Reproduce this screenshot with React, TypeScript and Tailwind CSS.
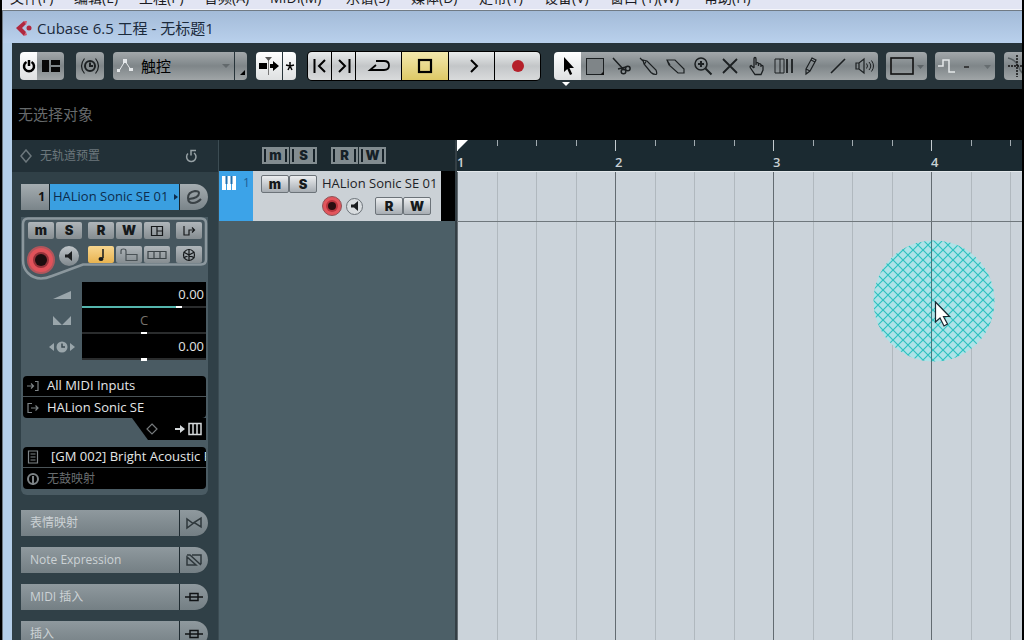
import type { ReactNode } from "react";
import clsx from "clsx";

const menuItems = [
  { label: "文件(F)", width: "w-[64px]" },
  { label: "编辑(E)", width: "w-[65px]" },
  { label: "工程(P)", width: "w-[65px]" },
  { label: "音频(A)", width: "w-[66px]" },
  { label: "MIDI(M)", width: "w-[76px]" },
  { label: "乐谱(S)", width: "w-[65px]" },
  { label: "媒体(D)", width: "w-[68px]" },
  { label: "走带(T)", width: "w-[65px]" },
  { label: "设备(V)", width: "w-[66px]" },
  { label: "窗口 (1)(W)", width: "w-[94px]" },
  { label: "帮助(H)", width: "w-[64px]" },
];

const grayFace = "bg-linear-to-b from-[#a3a8ab] via-[#7f8689] to-[#a0a5a7]";
const whiteFace = "bg-linear-to-b from-[#ffffff] via-[#eceeef] to-[#dfe1e2]";
const silverFace = "bg-linear-to-b from-[#e9ebec] via-[#c3c6c8] to-[#d9dbdc]";

function Icon({ w = 20, h = 20, children }: { w?: number; h?: number; children: ReactNode }) {
  return (
    <svg width={w} height={h} viewBox={`0 0 ${w} ${h}`} fill="none" stroke="currentColor" strokeWidth="1.5" className="shrink-0">
      {children}
    </svg>
  );
}

function ToolButton({ label, className, children }: { label: string; className?: string; children: ReactNode }) {
  return (
    <button aria-label={label} className={clsx("h-7 flex items-center justify-center shrink-0", className)}>
      {children}
    </button>
  );
}

const tools = [
  {
    name: "Select",
    icon: <path d="M6 1v15l3.300-3 2.700 6 2.200-1-2.700-6H16z" fill="#000" stroke="none" />,
  },
  {
    name: "Range",
    icon: (
      <>
        <rect x="1.500" y="2.500" width="17" height="16" strokeWidth="1" fill="#7f8588" />
        <path d="M19 15v4h-4z" fill="#111" stroke="none" />
      </>
    ),
  },
  {
    name: "Split",
    icon: (
      <>
        <path d="M1 2l11 12M6 13l8-2" />
        <circle cx="11.500" cy="15.500" r="2.300" />
        <circle cx="15.800" cy="12.500" r="2.300" />
      </>
    ),
  },
  {
    name: "Glue",
    icon: <path d="M1 2l3 3M4 4l4 1 9 9q1.500 4 0 4.500-3 0-5-2L5 8zM7 5.500L5.500 8" strokeWidth="1.200" />,
  },
  {
    name: "Erase",
    icon: <path d="M1 4h8l9 9v4h-6L3 9zM1 4l3 5" strokeWidth="1.200" />,
  },
  {
    name: "Zoom",
    icon: (
      <>
        <circle cx="8" cy="8" r="6" />
        <path d="M8 5v6M5 8h6" strokeWidth="2" />
        <path d="M12.500 12.500l6 6" strokeWidth="2" />
      </>
    ),
  },
  { name: "Mute", icon: <path d="M3 3l14 14M17 3L3 17" strokeWidth="1.800" /> },
  {
    name: "Time Warp",
    icon: (
      <path
        d="M7 12V3q0-1.500 1-1.500T9 3v6M9 7q2-1 2.500.5V10M11.500 8q2-.8 2.500.7V11M14 9.500q2-.5 2 1V14l-2 4.500H8L3.500 12q-1-2 .5-2.500L7 12"
        strokeWidth="1.300"
      />
    ),
  },
  {
    name: "Comp",
    icon: (
      <>
        <path d="M1 3h9v14H1zM6 3v14" strokeWidth="1" />
        <path d="M13 3v14M18 3v14" strokeWidth="1.800" />
      </>
    ),
  },
  { name: "Draw", icon: <path d="M5 13L11 2l4 2-6 11-4 3zM5 13l4 2M10 4l4 2" strokeWidth="1.200" /> },
  { name: "Line", icon: <path d="M3 17L17 3" strokeWidth="1.600" /> },
  {
    name: "Play",
    icon: (
      <>
        <path d="M1 7h3l5-4v14l-5-4H1zM4 7v6" strokeWidth="1.200" />
        <path d="M11.500 7.500q2 2.500 0 5M14 6q3.500 4 0 8M16.500 4.500q4 5.500 0 11" strokeWidth="1" />
      </>
    ),
  },
];

function Toolbar() {
  return (
    <div className="h-[46px] shrink-0 bg-[#27343a] flex items-center px-2 overflow-hidden text-[#1c2022]">
      <div className="flex shrink-0 rounded-sm overflow-hidden mr-3">
        <ToolButton label="Activate Project" className={clsx("w-[17px]", whiteFace)}>
          <Icon w={14} h={14}>
            <path d="M4.500 3a5 5 0 1 0 5 0M7 1v6" stroke="#000" strokeWidth="2.500" />
          </Icon>
        </ToolButton>
        <ToolButton label="Window Layout" className={clsx("w-[27px]", grayFace)}>
          <Icon w={18} h={12}>
            <path d="M0 0h7v12H0zM9 0h9v5H9zM9 7h9v5H9z" fill="#080808" stroke="none" />
          </Icon>
        </ToolButton>
      </div>
      <ToolButton label="Constrain Delay Compensation" className={clsx("w-7 rounded-sm mr-[9px]", grayFace)}>
        <Icon>
          <circle cx="10" cy="10" r="5" strokeWidth="2" />
          <path d="M10 6.500V10h3" strokeWidth="2" />
          <path d="M4.500 2.500q-6 7.500 0 15M15.500 2.500q6 7.500 0 15" strokeWidth="1.200" />
        </Icon>
      </ToolButton>
      <div className="flex shrink-0 rounded-sm overflow-hidden mr-[9px] gap-px">
        <label className={clsx("relative flex items-center w-[121px] h-7", grayFace)}>
          <span className="absolute left-1 text-[#e5e8ea] pointer-events-none">
            <Icon w={16} h={16}>
              <path d="M2 13L8 3l6 9" strokeWidth="1" />
              <path d="M0 11h3v3H0zM6 1h4v4H6zM12 10h4v3h-4z" fill="currentColor" stroke="none" />
            </Icon>
          </span>
          <select aria-label="Automation Mode" className="appearance-none w-full h-full pl-7 text-[15px] text-black outline-none">
            <option>触控</option>
          </select>
          <span className="absolute right-1 border-x-4 border-t-4 border-x-transparent border-t-[#62696c] pointer-events-none" />
        </label>
        <ToolButton label="Automation Panel" className={clsx("w-3", grayFace)}>
          <Icon w={10} h={20}>
            <path d="M9 14v5H4z" fill="#000" stroke="none" />
          </Icon>
        </ToolButton>
      </div>
      <div className="flex shrink-0 rounded-sm overflow-hidden mr-3 gap-px">
        <ToolButton label="Auto-Scroll" className={clsx("w-[26px]", whiteFace)}>
          <Icon w={22} h={20}>
            <path d="M1 7h8v6H1zM12 8h3V5l6 5-6 5v-3h-3z" fill="#000" stroke="none" />
            <path d="M10.500 3v16" stroke="#777" strokeWidth="1" />
            <path d="M7 1h7l-3.500 4z" fill="#555" stroke="none" />
          </Icon>
        </ToolButton>
        <ToolButton label="Suspend Auto-Scroll" className={clsx("w-[13px]", whiteFace)}>
          <Icon w={10} h={10}>
            <path d="M5 1v4M5 5L1 4M5 5l4-1M5 5L3 9M5 5l2 4" stroke="#000" />
          </Icon>
        </ToolButton>
      </div>

      {/* Transport */}
      <div className="flex shrink-0 rounded-sm mr-3.5 gap-px bg-black ring-1 ring-black text-black">
        <ToolButton label="Go to Left Locator" className={clsx("w-[23px] rounded-l-sm", silverFace)}>
          <Icon w={14} h={16}>
            <path d="M1.500 1v14M12 2L6 8l6 6" strokeWidth="2" />
          </Icon>
        </ToolButton>
        <ToolButton label="Go to Right Locator" className={clsx("w-[23px]", silverFace)}>
          <Icon w={14} h={16}>
            <path d="M12.500 1v14M2 2l6 6-6 6" strokeWidth="2" />
          </Icon>
        </ToolButton>
        <ToolButton label="Cycle" className={clsx("w-[45px]", silverFace)}>
          <Icon w={24} h={16}>
            <path d="M9 3h8q5 0 5 4.500T17 12H3l6-5" strokeWidth="1.800" />
          </Icon>
        </ToolButton>
        <ToolButton label="Stop" className="w-[46px] bg-linear-to-b from-[#f3e8ad] to-[#dec966]">
          <Icon w={16} h={16}>
            <rect x="2" y="2" width="12" height="12" strokeWidth="2.200" />
          </Icon>
        </ToolButton>
        <ToolButton label="Start" className={clsx("w-[45px]", silverFace)}>
          <Icon w={16} h={16}>
            <path d="M7 2l6 6-6 6" strokeWidth="2" />
          </Icon>
        </ToolButton>
        <ToolButton label="Record" className={clsx("w-[45px] rounded-r-sm", silverFace)}>
          <span className="size-3 rounded-full bg-[#b5202a]" />
        </ToolButton>
      </div>

      <div className="flex shrink-0 mr-2">
        {tools.map((tool, i) => (
          <div key={tool.name} className="relative">
            <ToolButton
              label={tool.name}
              className={clsx("w-[27px]", i === 0 ? whiteFace : grayFace, i === 0 && "rounded-l-sm", i === tools.length - 1 && "rounded-r-sm")}
            >
              <Icon>{tool.icon}</Icon>
            </ToolButton>
            {i === 0 && <span className="absolute left-2 top-[30px] border-x-4 border-t-4 border-x-transparent border-t-white" />}
          </div>
        ))}
      </div>
      <ToolButton label="Color" className={clsx("w-[41px] rounded-sm mr-2", grayFace)}>
        <Icon w={34} h={20}>
          <rect x="1" y="2" width="22" height="16" strokeWidth="1.600" stroke="#111" />
          <path d="M27 9h7l-3.500 4z" fill="#5d6467" stroke="none" />
        </Icon>
      </ToolButton>
      <ToolButton label="Nudge" className={clsx("w-[60px] rounded-sm mr-[9px]", grayFace)}>
        <Icon w={56} h={20}>
          <path d="M1 10h5V4h6v12h6" stroke="#e4e7e9" />
          <path d="M27 11h5" stroke="#222" />
          <path d="M47 9h7l-3.500 4z" fill="#666d70" stroke="none" />
        </Icon>
      </ToolButton>
      <ToolButton label="Snap" className={clsx("w-10 rounded-sm justify-start", grayFace)}>
        <Icon w={34} h={24}>
          <path d="M4 4q9 2 12 12l4 5" stroke="#555c5f" />
          <path d="M13 1v22M4 12h26" stroke="#111" strokeDasharray="2 1" />
        </Icon>
      </ToolButton>
    </div>
  );
}

function KeyButton({ label, wide, tone = "dim", children }: { label: string; wide?: boolean; tone?: "dim" | "light" | "on"; children: ReactNode }) {
  return (
    <button
      aria-label={label}
      className={clsx(
        "flex items-center justify-center rounded-xs font-['Inter',sans-serif] font-black text-[13px] leading-none text-[#16191b] shrink-0",
        wide ? "w-7 h-[18px]" : "w-[26px] h-[17px]",
        tone === "dim" && "bg-linear-to-b from-[#b0b6ba] to-[#858d91]",
        tone === "light" && "bg-linear-to-b from-[#eceef0] to-[#a7adb3] border border-[#6c7379]",
        tone === "on" && "bg-linear-to-b from-[#f8d68e] to-[#e8b34f]",
      )}
    >
      {children}
    </button>
  );
}

function Speaker() {
  return (
    <Icon w={10} h={10}>
      <path d="M1 3.500h3L8 0v10L4 6.500H1z" fill="#1a1d1f" stroke="none" />
    </Icon>
  );
}

function ValueRow({ label, value, center, fill, children }: { label: string; value: string; center?: boolean; fill?: boolean; children: ReactNode }) {
  return (
    <label className="flex items-center text-[#9aa6ab] h-[26px]">
      <span className="w-10 ml-[21px] flex justify-center">{children}</span>
      <span className="flex-1 h-full bg-black flex flex-col justify-between">
        <span className={clsx("text-[13px] leading-6", center ? "text-center text-[#77736c]" : "text-right text-[#e3e3e3] pr-0.5")}>{value}</span>
        <input
          type="range"
          aria-label={label}
          defaultValue={fill ? 80 : 50}
          className={clsx(
            "appearance-none w-full h-0.5 [&::-webkit-slider-thumb]:appearance-none [&::-webkit-slider-thumb]:h-[3px] [&::-webkit-slider-thumb]:w-1.5 [&::-webkit-slider-thumb]:bg-white",
            fill ? "bg-linear-to-r from-[#55b5ad] from-79% to-[#2a2c2d] to-80%" : "bg-[#2a2c2d]",
          )}
        />
      </span>
    </label>
  );
}

function RouteRow({ icon, muted, children }: { icon: ReactNode; muted?: boolean; children: ReactNode }) {
  return (
    <button className={clsx("h-[21px] w-full flex items-center text-left pl-1 gap-2 whitespace-nowrap overflow-hidden text-[13px]", muted ? "text-[#696d6f]" : "text-[#e4e6e7]")}>
      <span className="text-[#7d8386] w-3 shrink-0">{icon}</span>
      {children}
    </button>
  );
}

const sections = [
  { title: "表情映射", icon: <path d="M2 3v9l6-4.500zM16 2v9l-7-4.500z" /> },
  { title: "Note Expression", icon: <path d="M2 4v8h9zM7 2h9v9M2 2h3l11 10" /> },
  { title: "MIDI 插入", icon: <path d="M0 7h18M5 3.500h8v7H5z" stroke="#101315" /> },
  { title: "插入", icon: <path d="M0 7h18M5 3.500h8v7H5z" stroke="#101315" /> },
];

function Inspector() {
  return (
    <aside className="w-[206px] shrink-0 bg-[#304047] flex flex-col overflow-hidden">
      <div className="h-8 shrink-0 bg-[#223037] flex items-center pl-2 pr-5 text-[#6c777c]">
        <Icon w={12} h={14}>
          <path d="M6 1l5 6-5 6-5-6z" />
        </Icon>
        <span className="text-xs ml-2 flex-1">无轨道预置</span>
        <button aria-label="Reset" className="text-[#97a1a5]">
          <Icon w={14} h={14}>
            <path d="M4 4.500a4.700 4.700 0 1 0 6-.5M12 1.500H7v5" />
          </Icon>
        </button>
      </div>

      <div className="pl-[9px] pr-2.5 pt-3 flex flex-col flex-1">
        <div className="flex h-[26px] shrink-0 rounded-l-sm rounded-r-full overflow-hidden gap-px mb-[7px] bg-[#18262d]">
          <span className="w-7 bg-linear-to-b from-[#a5adb1] to-[#7a8489] text-[#111] text-xs font-bold flex items-center justify-end pr-1">1</span>
          <div className="flex-1 min-w-0 bg-[#3a9fe0] flex items-center text-[#0d2c4c]">
            <input aria-label="Track Name" defaultValue="HALion Sonic SE 01" className="min-w-0 flex-1 pl-[3px] text-[13px] outline-none" />
            <Icon w={6} h={10}>
              <path d="M1 2l4 3-4 3z" fill="currentColor" stroke="none" />
            </Icon>
          </div>
          <ToolButton label="Edit Instrument" className="w-7 h-full bg-linear-to-b from-[#a5adb1] to-[#7a8489] text-[#3a4246]">
            <Icon w={18} h={18}>
              <path d="M4 11q10-1 10-6 0-2-4-2-7 1-7 7 0 5 5 5 4 0 8-4" strokeWidth="2" />
            </Icon>
          </ToolButton>
        </div>

        <div className="bg-[#4a5b63] rounded-b-md pb-1.5 shrink-0">
          <div className="relative h-[63px]">
            <svg viewBox="0 0 187 63" className="absolute inset-0 w-full h-full" fill="#47575f" stroke="#8b979d" strokeWidth="2.500">
              <path d="M7 1.500h173q5 0 5 5v36q0 5-5 5H62L31 59q-15 6-24-3-5-5-5-13V7q0-5.500 5-5.500z" />
            </svg>
            <div className="relative flex pt-[5px] pl-[7px] gap-0.5">
              <KeyButton label="Mute">m</KeyButton>
              <KeyButton label="Solo">S</KeyButton>
              <span className="w-0.5" />
              <KeyButton label="Read Automation">R</KeyButton>
              <KeyButton label="Write Automation">W</KeyButton>
              <KeyButton label="Open Device Panels">
                <Icon w={14} h={12}>
                  <path d="M1.500 1.500h11v9h-11zM7 1.500v9M7 6h5.500" strokeWidth="1.200" />
                </Icon>
              </KeyButton>
              <span className="w-0.5" />
              <KeyButton label="Input Transformer">
                <Icon w={16} h={12}>
                  <path d="M3 1v9h5V5h5M11 2.500L13.500 5 11 7.500" strokeWidth="1.200" />
                </Icon>
              </KeyButton>
            </div>
            <div className="relative flex items-start pt-[7px] pl-1.5 gap-0.5">
              <button aria-label="Record Enable" className="size-7 rounded-full bg-[#e0525a] border-2 border-[#b0555b] flex items-center justify-center">
                <span className="size-3 rounded-full bg-[#1c0d0f] ring-2 ring-[#94323a]" />
              </button>
              <button aria-label="Monitor" className="size-5 ml-0.5 mr-[7px] rounded-full bg-linear-to-b from-[#c0c6ca] to-[#7f888d] flex items-center justify-center">
                <Speaker />
              </button>
              <KeyButton label="Timebase" tone="on">
                <Icon w={12} h={14}>
                  <path d="M8 1v9" />
                  <ellipse cx="6" cy="11" rx="2.500" ry="2" fill="currentColor" stroke="none" />
                </Icon>
              </KeyButton>
              <KeyButton label="Lock">
                <Icon w={20} h={14}>
                  <path d="M2 6V3q0-2 2.500-2T7 3v4M7 6.500h11v6H7z" stroke="#4a5256" strokeWidth="1.200" />
                </Icon>
              </KeyButton>
              <KeyButton label="Lanes">
                <Icon w={20} h={12}>
                  <path d="M1 2.500h18v7H1zM7 2.500v7M13 2.500v7" stroke="#3b4347" strokeWidth="1.200" />
                </Icon>
              </KeyButton>
              <span className="w-0.5" />
              <KeyButton label="Freeze">
                <Icon w={16} h={14}>
                  <circle cx="8" cy="7" r="5.500" strokeWidth="1.200" />
                  <path d="M8 1v12M2.500 4l11 6M13.500 4l-11 6" strokeWidth="1.200" />
                </Icon>
              </KeyButton>
            </div>
          </div>

          <div className="pr-0.5 pt-0.5">
            <ValueRow label="Volume" value="0.00" fill>
              <Icon w={20} h={10}>
                <path d="M1 9L19 1v8z" fill="currentColor" stroke="none" />
              </Icon>
            </ValueRow>
            <ValueRow label="Pan" value="C" center>
              <Icon w={20} h={10}>
                <path d="M1 0l9 9 9-9v9H1z" fill="currentColor" stroke="none" />
              </Icon>
            </ValueRow>
            <ValueRow label="Delay" value="0.00">
              <Icon w={26} h={12}>
                <path d="M5 2v8L0 6zM21 2v8l5-4z" fill="currentColor" stroke="none" />
                <circle cx="13" cy="6" r="5.500" fill="currentColor" stroke="none" />
                <path d="M13 2.500V6h3" stroke="#3b4a51" />
              </Icon>
            </ValueRow>
          </div>

          <div className="mt-4 mx-0.5 rounded-sm bg-black divide-y divide-[#4a5357]">
            <RouteRow
              icon={
                <Icon w={12} h={12}>
                  <path d="M0 6h6M4 3.500L6.500 6 4 8.500M8 1.500h3v9H8" strokeWidth="1.200" />
                </Icon>
              }
            >
              All MIDI Inputs
            </RouteRow>
            <RouteRow
              icon={
                <Icon w={12} h={12}>
                  <path d="M5 1.500H1v9h4M4 6h7M8.500 3.500L11 6 8.500 8.500" strokeWidth="1.200" />
                </Icon>
              }
            >
              HALion Sonic SE
            </RouteRow>
          </div>
          <div className="flex justify-end mx-0.5 mb-[7px]">
            <div className="w-[74px] h-[22px] bg-black [clip-path:polygon(0_0,100%_0,100%_100%,16px_100%)] flex items-center justify-end gap-1 pr-1">
              <button aria-label="Presets" className="text-[#75797b] mr-3">
                <Icon w={12} h={12}>
                  <path d="M6 1l5 5-5 5-5-5z" strokeWidth="1.200" />
                </Icon>
              </button>
              <button aria-label="Edit Instrument" className="text-[#d4d8da]">
                <Icon w={28} h={14}>
                  <path d="M1 6h5V3l5 4-5 4V8H1z" fill="currentColor" stroke="none" />
                  <path d="M15 1.500h12v11H15zM19 1.500v11M23 1.500v11" />
                </Icon>
              </button>
            </div>
          </div>

          <div className="mx-0.5 rounded-sm bg-black divide-y divide-[#4a5357]">
            <RouteRow
              icon={
                <Icon w={12} h={14}>
                  <path d="M1.500 1h9v12h-9zM3.500 4h5M3.500 7h5M3.500 10h5" strokeWidth="1.200" />
                </Icon>
              }
            >
              <span className="ml-1">[GM 002] Bright Acoustic Piano</span>
            </RouteRow>
            <RouteRow
              muted
              icon={
                <Icon w={12} h={14}>
                  <circle cx="6" cy="7" r="5" strokeWidth="2" />
                  <path d="M6 4v9" strokeWidth="2" />
                </Icon>
              }
            >
              <span className="text-xs">无鼓映射</span>
            </RouteRow>
          </div>
        </div>

        <div className="mt-[15px] flex flex-col gap-[11px]">
          {sections.map((s) => (
            <button key={s.title} className="flex h-[26px] shrink-0 rounded-l-sm rounded-r-full overflow-hidden gap-px bg-[#1f2b31]">
              <span className="flex-1 h-full flex items-center pl-[9px] text-xs text-[#ccd2d5] bg-linear-to-b from-[#8f999e] to-[#747f84]">{s.title}</span>
              <span className="w-7 h-full flex items-center justify-center bg-linear-to-b from-[#8f999e] to-[#747f84] text-[#2f383c]">
                <Icon w={18} h={14}>{s.icon}</Icon>
              </span>
            </button>
          ))}
        </div>
      </div>
    </aside>
  );
}

function HeaderKey({ label, children }: { label: string; children: ReactNode }) {
  return (
    <button aria-label={label} className="w-[27px] h-[17px] bg-[#828c90] px-0.5 flex items-center justify-center font-['Inter',sans-serif] font-black text-[13px] leading-none text-[#152027]">
      <span className="border-x-2 border-[#152027] w-full text-center">{children}</span>
    </button>
  );
}

function TrackList() {
  return (
    <section className="w-[237px] shrink-0 bg-[#4c5f67] border-l border-[#3c4c53]">
      <div className="h-[31px] bg-[#1c292f] flex items-center pl-[43px] gap-px">
        <HeaderKey label="Deactivate All Mute">m</HeaderKey>
        <HeaderKey label="Deactivate All Solo">S</HeaderKey>
        <span className="w-3" />
        <HeaderKey label="Read All">R</HeaderKey>
        <HeaderKey label="Write All">W</HeaderKey>
      </div>
      <div className="flex h-[50px] bg-black">
        <div className="w-[34px] bg-[#3ca3e8] flex items-start gap-1.5 pt-1 pl-[3px] text-xs leading-4 text-[#1c5c94]">
          <Icon w={15} h={16}>
            <path d="M0 1h4v14H0zM5 1h4v14H5zM10 1h4v14h-4z" fill="#fff" stroke="none" />
            <path d="M4.500 1v8M9.500 1v8" stroke="#1f6fae" strokeWidth="2" />
          </Icon>
          1
        </div>
        <div className="flex-1 min-w-0 bg-[#cbd1d6] pl-2 pt-1">
          <div className="flex items-center h-[18px]">
            <KeyButton label="Mute" tone="light" wide>m</KeyButton>
            <KeyButton label="Solo" tone="light" wide>S</KeyButton>
            <input aria-label="Track Name" defaultValue="HALion Sonic SE 01" className="min-w-0 flex-1 pl-[5px] text-[13px] text-[#1d2226] outline-none" />
          </div>
          <div className="flex items-center h-[22px] mt-0.5 pl-[61px]">
            <button aria-label="Record Enable" className="size-5 rounded-full bg-[#e2555c] border border-[#8f5357] flex items-center justify-center">
              <span className="size-2 rounded-full bg-[#2a0d10] ring-2 ring-[#b8343d]" />
            </button>
            <button aria-label="Monitor" className="size-[17px] ml-1 mr-3 rounded-full border border-[#6c7379] bg-[#d8dcdf] flex items-center justify-center">
              <Speaker />
            </button>
            <KeyButton label="Read" tone="light" wide>R</KeyButton>
            <KeyButton label="Write" tone="light" wide>W</KeyButton>
          </div>
        </div>
        <div className="w-3.5" />
      </div>
    </section>
  );
}

const bars = [1, 2, 3, 4];

function Arrange() {
  return (
    <section className="flex-1 min-w-0 flex flex-col overflow-hidden border-l-2 border-[#343f45]">
      <div className="relative h-[31px] shrink-0 bg-[#1b2a31] flex">
        {bars.map((bar) => (
          <div key={bar} className="w-[158px] shrink-0 flex flex-col justify-between">
            <div className="grid grid-cols-4 h-[11px]">
              <span className="border-l border-[#c4ccd0] h-[11px]" />
              <span className="border-l border-[#a1abb0] h-1.5" />
              <span className="border-l border-[#a1abb0] h-1.5" />
              <span className="border-l border-[#a1abb0] h-1.5" />
            </div>
            <span className="text-[13px] leading-[17px] font-semibold text-[#c9d0d4]">{bar}</span>
          </div>
        ))}
        <span className="absolute left-0 top-0 size-[11px] bg-white [clip-path:polygon(0_0,100%_0,0_100%)]" />
      </div>
      <div className="relative flex-1 bg-[#cbd3da] border-t border-[#e3e8eb] flex">
        {bars.map((bar) => (
          <div key={bar} className="w-[158px] shrink-0 grid grid-cols-4">
            <span className="border-l border-[#636b71]" />
            <span className="border-l border-[#b0b8be]" />
            <span className="border-l border-[#b0b8be]" />
            <span className="border-l border-[#b0b8be]" />
          </div>
        ))}
        <div className="absolute inset-x-0 top-[49px] border-t border-[#6f777c]" />
        {/* Pointer highlight */}
        <svg width="122" height="122" viewBox="0 0 122 122" className="absolute left-[416px] top-[68px]">
          <defs>
            <pattern id="hatch" width="10" height="10" patternUnits="userSpaceOnUse">
              <rect width="10" height="10" fill="#aee3e8" />
              <path d="M0 0l10 10M10 0L0 10" stroke="#2dc2c0" strokeWidth="1.200" />
            </pattern>
          </defs>
          <circle cx="61" cy="61" r="60.500" fill="url(#hatch)" />
          <path d="M58.500 0v122" stroke="#44777c" />
          <path d="M62.500 62v20l4.500-4 4 8 3.500-2-4-7.500h6z" fill="#fff" stroke="#1b2730" strokeWidth="1.200" />
        </svg>
      </div>
    </section>
  );
}

export default function App() {
  return (
    <div className="h-screen flex flex-col overflow-hidden bg-black pl-0.5 pr-0.5 font-['Open_Sans','Noto_Sans_CJK_SC',sans-serif]">
      <nav className="h-2.5 shrink-0 bg-[#e2e5f3] flex items-end pl-2 pb-px overflow-hidden border-b border-[#f5f6fb]">
        {menuItems.map((item) => (
          <button key={item.label} className={clsx("text-left whitespace-nowrap text-sm text-[#1b1b22] shrink-0", item.width)}>
            {item.label}
          </button>
        ))}
      </nav>
      <div className="flex-1 min-h-0 flex flex-col border-t border-l border-[#707a84] bg-[#b5cfea] pl-[9px]">
        <header className="h-8 shrink-0 flex items-center bg-linear-to-b from-[#a3bbd8] to-[#b9d0ec] -ml-[9px] pl-3 pt-0.5 gap-1">
          <Icon w={18} h={18}>
            <path d="M1 9L9 2l2 3-4 4 4 4-2 4z" fill="#b0283f" stroke="none" />
            <path d="M9 2l3 0-1 4zM9 17l3-1-1-3z" fill="#d3566a" stroke="none" />
            <circle cx="14" cy="9" r="2.500" fill="#b0283f" stroke="none" />
          </Icon>
          <h1 className="text-[15px] text-[#1b2a3c]">Cubase 6.5 工程 - 无标题1</h1>
        </header>
        <Toolbar />
        <div className="h-[51px] shrink-0 bg-black flex items-center pl-1.5 text-[15px] text-[#666a6c]">无选择对象</div>
        <main className="flex-1 min-h-0 flex">
          <Inspector />
          <TrackList />
          <Arrange />
        </main>
      </div>
    </div>
  );
}
